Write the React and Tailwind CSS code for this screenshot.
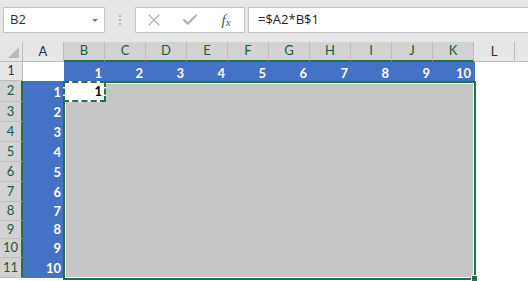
import { X, Check } from 'lucide-react'

const columns = [
  { letter: 'A', selected: false },
  { letter: 'B', selected: true },
  { letter: 'C', selected: true },
  { letter: 'D', selected: true },
  { letter: 'E', selected: true },
  { letter: 'F', selected: true },
  { letter: 'G', selected: true },
  { letter: 'H', selected: true },
  { letter: 'I', selected: true },
  { letter: 'J', selected: true },
  { letter: 'K', selected: true },
  { letter: 'L', selected: false }
]

// rows 2..11, heights follow the screenshot (slightly uneven)
const bodyRows = [
  { n: 2, h: 'h-[21px]' },
  { n: 3, h: 'h-[20px]' },
  { n: 4, h: 'h-[20px]' },
  { n: 5, h: 'h-[20px]' },
  { n: 6, h: 'h-[20px]' },
  { n: 7, h: 'h-[20px]' },
  { n: 8, h: 'h-[19px]' },
  { n: 9, h: 'h-[18px]' },
  { n: 10, h: 'h-[19px]' },
  { n: 11, h: 'h-[20px]' }
]

const topNumbers = [1, 2, 3, 4, 5, 6, 7, 8, 9, 10]

function FormulaBar() {
  return (
    <div className="h-[42px] bg-[#e6e6e6] flex items-start pt-[7px] pl-[3px]">
      {/* Name box */}
      <div className="w-[102px] h-[26px] shrink-0 bg-white border border-[#c6c6c6] flex items-center justify-between pl-[6px] pr-[6px]">
        <span className="font-['Open_Sans',sans-serif] text-[13px] text-[#333]">B2</span>
        <span className="w-0 h-0 border-l-[3px] border-r-[3px] border-t-[3px] border-l-transparent border-r-transparent border-t-[#7a7a7a]" />
      </div>

      {/* splitter dots */}
      <div className="w-[30px] shrink-0 flex flex-col items-center gap-[2px] pt-[8px]">
        <span className="w-[2px] h-[2px] bg-[#b4b4b4]" />
        <span className="w-[2px] h-[2px] bg-[#b4b4b4]" />
        <span className="w-[2px] h-[2px] bg-[#b4b4b4]" />
      </div>

      {/* cancel / enter / fx */}
      <div className="w-[110px] h-[26px] shrink-0 bg-white border border-[#c6c6c6] flex items-center">
        <span className="w-[36px] flex justify-center">
          <X size={20} strokeWidth={1.3} color="#b0b0b0" />
        </span>
        <span className="w-[36px] flex justify-center">
          <Check size={18} strokeWidth={2.8} color="#b0b0b0" />
        </span>
        <span className="w-[36px] flex justify-center font-['Liberation_Serif',serif] italic text-[15px] text-[#555] leading-none">
          f<span className="text-[11px] mt-[4px]">x</span>
        </span>
      </div>

      {/* formula input */}
      <div className="flex-1 h-[26px] ml-[3px] -mr-[2px] bg-white border border-[#c6c6c6] flex items-center pl-[9px]">
        <span className="font-['Open_Sans',sans-serif] text-[13px] text-[#222]">=$A2*B$1</span>
      </div>
    </div>
  )
}

function ColumnHeaders() {
  return (
    <div className="h-[20px] flex">
      <div className="w-[23px] shrink-0 bg-[#e6e6e6] border-r border-b border-[#bdbdbd] relative">
        <svg width="22" height="19" className="absolute left-0 top-0">
          <polygon points="19,5 19,16 8,16" fill="#b9b9b9" />
        </svg>
      </div>
      {columns.map((c) => (
        <div
          key={c.letter}
          className={`w-[41px] shrink-0 flex items-center justify-center text-[13px] border-r border-r-[#bdbdbd] ${
            c.selected
              ? 'bg-[#d2d2d2] border-b-2 border-b-[#217346] text-[#1d5b40]'
              : 'bg-[#e6e6e6] border-b border-b-[#bdbdbd] text-[#333]'
          }`}
        >
          {c.letter}
        </div>
      ))}
      <div className="flex-1 bg-[#e6e6e6] border-b border-b-[#bdbdbd]" />
    </div>
  )
}

function FirstRow() {
  return (
    <div className="h-[19px] flex">
      <div className="w-[23px] shrink-0 bg-[#e6e6e6] border-r border-b border-[#bdbdbd] flex items-center justify-center text-[13px] text-[#333]">
        1
      </div>
      <div className="w-[41px] shrink-0 bg-white" />
      <div className="w-[411px] shrink-0 bg-[#4472c4] flex">
        {topNumbers.map((n) => (
          <div key={n} className="w-[41px] shrink-0 flex items-end justify-end pr-[3px] pb-[1px] text-[13px] font-bold text-white leading-none">
            {n}
          </div>
        ))}
      </div>
      <div className="flex-1 bg-white" />
    </div>
  )
}

function Body() {
  return (
    <div className="flex items-start">
      {/* row headers */}
      <div className="w-[23px] shrink-0 flex flex-col">
        {bodyRows.map((r) => (
          <div
            key={r.n}
            className={`${r.h} bg-[#d2d2d2] border-r-2 border-r-[#217346] border-b border-b-[#bdbdbd] flex items-center justify-center text-[13px] text-[#1d5b40]`}
          >
            {r.n}
          </div>
        ))}
      </div>

      {/* column A values */}
      <div className="w-[40px] shrink-0 flex flex-col bg-[#4472c4]">
        {bodyRows.map((r) => (
          <div key={r.n} className={`${r.h} flex items-end justify-end pr-[2px] pb-[3px] text-[13px] font-bold text-white leading-none`}>
            {r.n - 1}
          </div>
        ))}
      </div>

      {/* selected range B2:K11 */}
      <div className="relative w-[413px] h-[199px] shrink-0 border-2 border-[#217346]">
        <div className="h-full border border-white bg-[#c6c6c6]" />
        <div className="absolute -left-[2px] -top-[2px] w-[43px] h-[21px] bg-white border-2 border-dashed border-[#217346] flex items-end justify-end pr-[2px] pb-[2px] text-[13px] font-bold text-black leading-none">
          1
        </div>
        <div className="absolute -right-[4px] -bottom-[4px] w-[7px] h-[7px] bg-[#217346] border border-white" />
      </div>

      <div className="flex-1 h-[199px] bg-white" />
    </div>
  )
}

export default function App() {
  return (
    <div className="w-[528px] h-[281px] overflow-hidden bg-white font-['Lato',sans-serif] select-none">
      <FormulaBar />
      <ColumnHeaders />
      <FirstRow />
      <Body />
    </div>
  )
}
